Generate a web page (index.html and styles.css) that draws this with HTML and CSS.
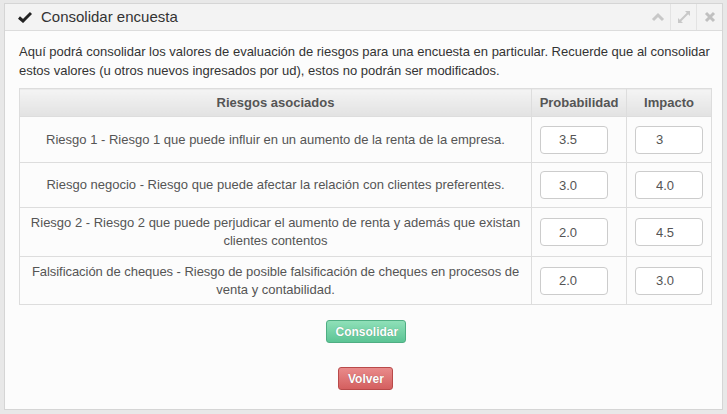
FILE: index.html
```html
<!DOCTYPE html>
<html>
<head>
<meta charset="utf-8">
<link rel="stylesheet" href="styles.css">
</head>
<body>
<div class="widget">
  <div class="widget-header">
    <div class="title">
      <svg class="check" width="14" height="12" viewBox="0 0 14 12"><path d="M1 6.5 L5 10 L13 2" fill="none" stroke="#222" stroke-width="3"/></svg>
      <span>Consolidar encuesta</span>
    </div>
    <div class="tools">
      <span class="tool"><svg width="14" height="10" viewBox="0 0 14 10"><path d="M2 8 L7 3 L12 8" fill="none" stroke="#c8c8c8" stroke-width="3"/></svg></span>
      <span class="tool"><svg width="14" height="14" viewBox="0 0 14 14"><path d="M8 1 H13 V6 Z M1 8 V13 H6 Z" fill="#c8c8c8"/><path d="M11 3 L3 11" stroke="#c8c8c8" stroke-width="2"/></svg></span>
      <span class="tool"><svg width="12" height="12" viewBox="0 0 12 12"><path d="M2 2 L10 10 M10 2 L2 10" stroke="#c0c0c0" stroke-width="3"/></svg></span>
    </div>
  </div>
  <div class="widget-body">
    <p class="intro">Aquí podrá consolidar los valores de evaluación de riesgos para una encuesta en particular. Recuerde que al consolidar estos valores (u otros nuevos ingresados por ud), estos no podrán ser modificados.</p>
    <table class="risks">
      <thead>
        <tr><th class="c-desc">Riesgos asociados</th><th class="c-prob">Probabilidad</th><th class="c-imp">Impacto</th></tr>
      </thead>
      <tbody>
        <tr class="r1"><td class="desc">Riesgo 1 - Riesgo 1 que puede influir en un aumento de la renta de la empresa.</td><td class="num"><input value="3.5"></td><td class="num"><input value="3"></td></tr>
        <tr class="r2"><td class="desc">Riesgo negocio - Riesgo que puede afectar la relación con clientes preferentes.</td><td class="num"><input value="3.0"></td><td class="num"><input value="4.0"></td></tr>
        <tr class="r3"><td class="desc">Riesgo 2 - Riesgo 2 que puede perjudicar el aumento de renta y además que existan clientes contentos</td><td class="num"><input value="2.0"></td><td class="num"><input value="4.5"></td></tr>
        <tr class="r4"><td class="desc"><span class="line">Falsificación de cheques - Riesgo de posible falsificación de cheques en procesos de</span> venta y contabilidad.</td><td class="num"><input value="2.0"></td><td class="num"><input value="3.0"></td></tr>
      </tbody>
    </table>
    <div class="actions">
      <button class="btn btn-green">Consolidar</button>
      <button class="btn btn-red">Volver</button>
    </div>
  </div>
</div>
</body>
</html>
```
FILE: styles.css
```css
html, body { margin: 0; padding: 0; }
body {
  background: #e8e8e8;
  font-family: "Liberation Sans", Arial, sans-serif;
  font-size: 13px;
  color: #555;
  width: 727px;
  height: 414px;
  overflow: hidden;
}
.widget {
  margin: 3px 4px 0 4px;
  border: 1px solid #d5d5d5;
  background: #fcfcfc;
  height: 407px;
  box-sizing: border-box;
}
.widget-header {
  height: 26px;
  background: #f3f3f3;
  border-bottom: 1px solid #dcdcdc;
  display: flex;
  justify-content: space-between;
  align-items: stretch;
}
.title {
  display: flex;
  align-items: center;
  padding-left: 13px;
  padding-bottom: 1px;
  font-size: 15px;
  color: #333;
}
.check { margin-right: 9px; }
.tools { display: flex; }
.tool {
  width: 25px;
  display: flex;
  align-items: center;
  justify-content: center;
  border-left: 1px solid #e3e3e3;
}
.tool:first-child { border-left: none; }
.widget-body { padding: 11px 10px 0 14px; }
.intro {
  margin: 0 0 8px 0;
  line-height: 19px;
  color: #333;
}
.risks {
  table-layout: fixed;
  border-collapse: collapse;
  border: 1px solid #dddddd;
}
.risks th {
  background: linear-gradient(#f4f4f4, #e2e2e2);
  font-weight: bold;
  color: #555;
  height: 27px;
  padding: 0;
  border: 1px solid #dddddd;
  border-top: none;
  text-align: center;
}
.risks th.c-desc { width: 511px; }
.risks th.c-prob { width: 94px; }
.risks th.c-imp { width: 84px; }
.risks td {
  border: 1px solid #dddddd;
  text-align: center;
  padding: 0;
  line-height: 18px;
  color: #555;
}
.risks td.desc { padding: 0 6px; }
.line { white-space: nowrap; letter-spacing: -0.05px; }
.risks td.num { padding: 0 0 0 8px; text-align: left; }
.r1 td { height: 45px; }
.r2 td { height: 44px; }
.r3 td { height: 48px; }
.r4 td { height: 47px; }
.risks input {
  width: 68px;
  height: 28px;
  box-sizing: border-box;
  border: 1px solid #cccccc;
  border-radius: 4px;
  background: #fff;
  font-family: "Liberation Sans", Arial, sans-serif;
  font-size: 13px;
  color: #555;
  padding: 0 0 0 18px;
  display: block;
  margin: 0;
  text-align: left;
}
.risks tr td:last-child input { padding-left: 20px; }
.actions {
  display: flex;
  flex-direction: column;
  align-items: center;
  padding-top: 15px;
  gap: 24px;
}
.btn {
  font-family: "Liberation Sans", Arial, sans-serif;
  font-weight: bold;
  font-size: 12px;
  color: #fff;
  border-radius: 3px;
  height: 23px;
  padding: 0 9px;
  text-shadow: 0 0 1px rgba(0,0,0,0.3);
  cursor: pointer;
}
.btn-green {
  background: linear-gradient(#8fe0b8, #5cc495);
  border: 1px solid #4fae83;
  width: 80px;
}
.btn-red {
  background: linear-gradient(#e98b8b, #d45f5f);
  border: 1px solid #b94a4a;
  width: 55px;
}
```
